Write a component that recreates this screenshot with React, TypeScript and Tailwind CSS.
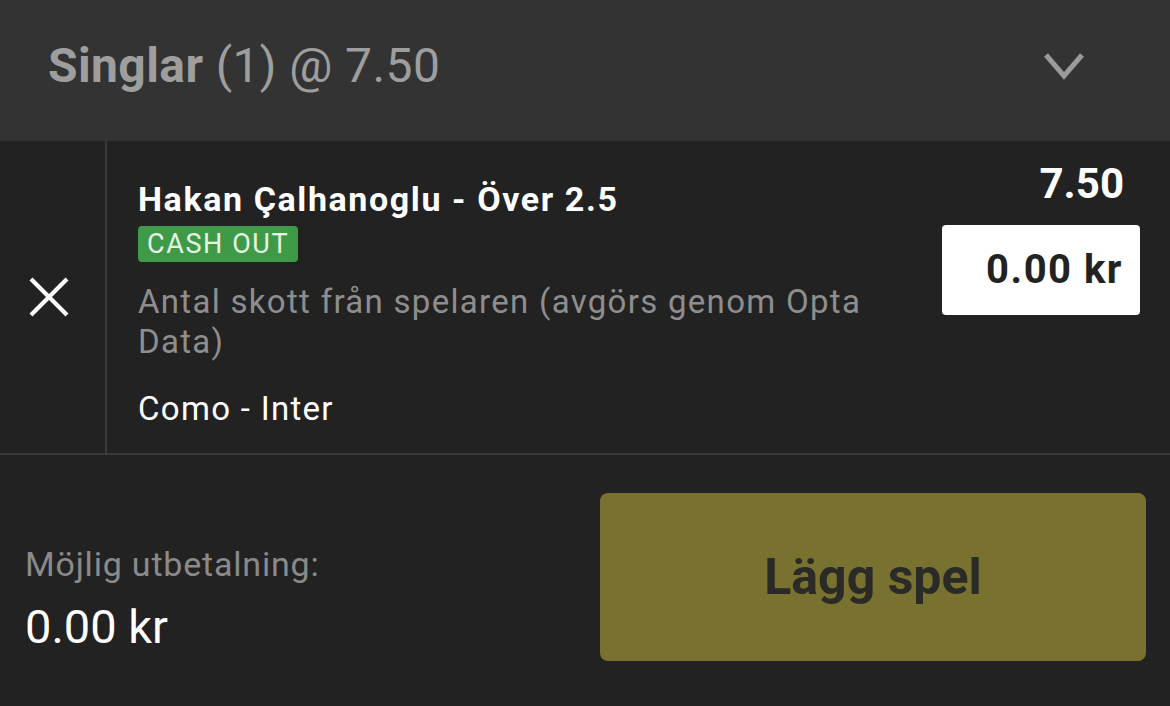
const font = { fontFamily: "Roboto, 'Liberation Sans', sans-serif" };

function Chevron() {
  return (
    <svg width="40" height="28" viewBox="0 0 40 28" fill="none">
      <polyline
        points="2,3 20,24 38,3"
        stroke="#9a9a9a"
        strokeWidth="5"
        strokeLinejoin="miter"
      />
    </svg>
  );
}

function CloseIcon() {
  return (
    <svg width="42" height="42" viewBox="0 0 42 42" fill="none">
      <path d="M3 3 L39 39 M39 3 L3 39" stroke="#ffffff" strokeWidth="4.2" />
    </svg>
  );
}

export default function App() {
  return (
    <div className="w-[1170px] h-[706px] bg-[#222222] flex flex-col" style={font}>
      {/* header */}
      <div className="h-[141px] shrink-0 bg-[#333333] flex items-center justify-between pl-[48px] pr-[86px] pb-[10px]">
        <div className="text-[48px] leading-none tracking-[0.4px] text-[#9e9e9e] whitespace-nowrap">
          <span className="font-bold">Singlar</span> (1) @ 7.50
        </div>
        <Chevron />
      </div>

      {/* bet row */}
      <div className="flex h-[314px] shrink-0 border-b-2 border-[#3a3a3a]">
        <div className="w-[107px] shrink-0 border-r-2 border-[#3a3a3a] flex items-center justify-center pr-[7px]">
          <CloseIcon />
        </div>
        <div className="flex-1 flex justify-between pl-[31px] pr-[30px]">
          <div className="flex flex-col items-start pt-[38px] w-[760px]">
            <div className="text-[34px] leading-[40px] tracking-[1.6px] font-bold text-white whitespace-nowrap">
              Hakan Çalhanoglu - Över 2.5
            </div>
            <div className="mt-[7px] h-[36px] px-[9px] rounded-[4px] bg-[#3f9a47] text-[#e6f4e6] text-[27px] leading-[36px] tracking-[1.6px]">
              CASH OUT
            </div>
            <div className="mt-[20px] text-[33px] leading-[40px] tracking-[1.3px] text-[#8e8e8e]">
              Antal skott från spelaren (avgörs genom Opta Data)
            </div>
            <div className="mt-[27px] text-[33px] leading-[40px] tracking-[1.3px] text-white">
              Como - Inter
            </div>
          </div>
          <div className="w-[198px] shrink-0 flex flex-col items-stretch pt-[22px]">
            <div className="text-right pr-[16px] text-[42px] leading-[42px] font-bold text-white">
              7.50
            </div>
            <div className="mt-[20px] h-[90px] rounded-[4px] bg-white flex items-center justify-end pr-[17px] text-[40px] tracking-[1.5px] font-bold text-[#222222]">
              0.00 kr
            </div>
          </div>
        </div>
      </div>

      {/* footer */}
      <div className="flex-1 flex justify-between pl-[25px] pr-[24px]">
        <div className="flex flex-col pt-[89px]">
          <div className="text-[34px] leading-[40px] tracking-[0.8px] text-[#8a8a8a]">Möjlig utbetalning:</div>
          <div className="mt-[15px] text-[47px] leading-[56px] text-white">0.00 kr</div>
        </div>
        <div className="mt-[38px] w-[546px] h-[168px] rounded-[8px] bg-[#78712f] flex items-center justify-center text-[50px] font-bold text-[#2a2a26]">
          Lägg spel
        </div>
      </div>
    </div>
  );
}
